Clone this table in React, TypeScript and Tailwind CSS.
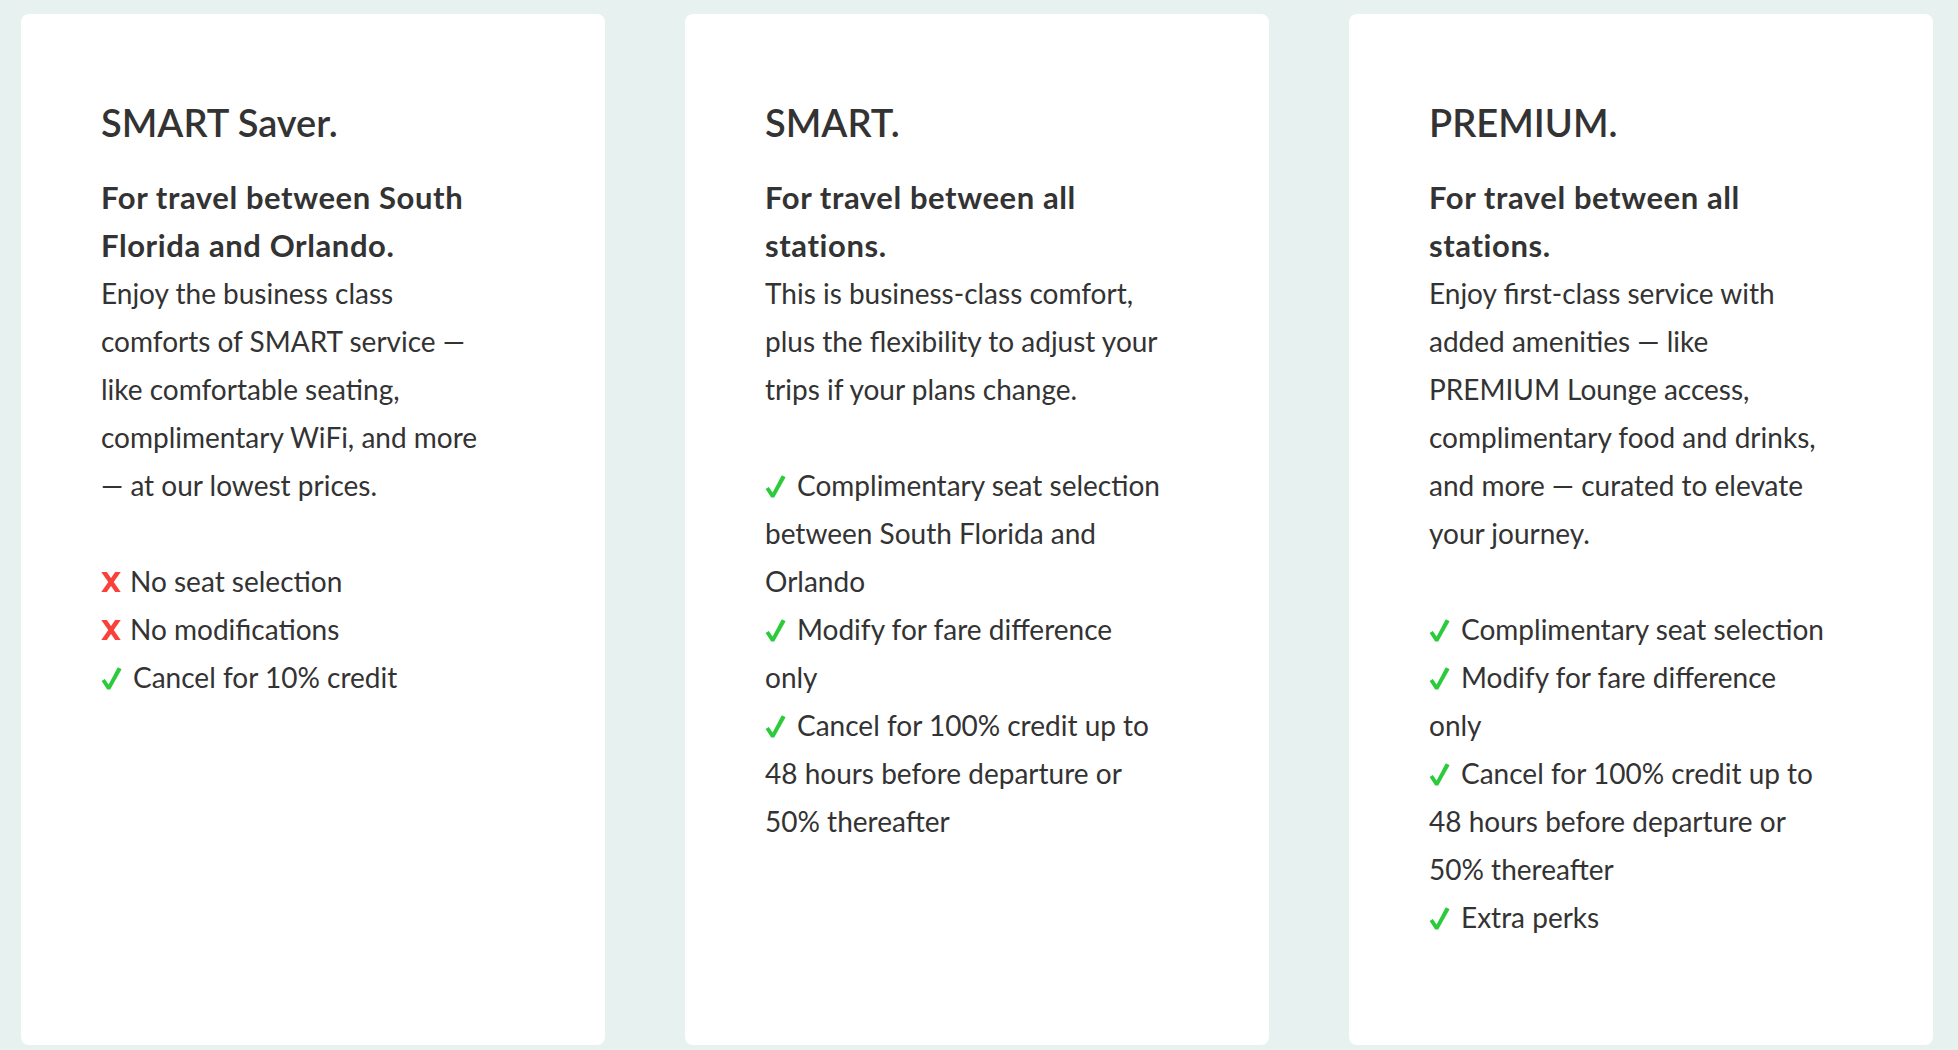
import React from "react";

type Item = { ok: boolean; lines: string[] };
type Card = { title: string; sub: string[]; body: string[]; items: Item[] };

const cards: Card[] = [
  {
    title: "SMART Saver.",
    sub: ["For travel between South", "Florida and Orlando."],
    body: [
      "Enjoy the business class",
      "comforts of SMART service —",
      "like comfortable seating,",
      "complimentary WiFi, and more",
      "— at our lowest prices.",
    ],
    items: [
      { ok: false, lines: ["No seat selection"] },
      { ok: false, lines: ["No modifications"] },
      { ok: true, lines: ["Cancel for 10% credit"] },
    ],
  },
  {
    title: "SMART.",
    sub: ["For travel between all", "stations."],
    body: [
      "This is business-class comfort,",
      "plus the flexibility to adjust your",
      "trips if your plans change.",
    ],
    items: [
      { ok: true, lines: ["Complimentary seat selection", "between South Florida and", "Orlando"] },
      { ok: true, lines: ["Modify for fare difference", "only"] },
      { ok: true, lines: ["Cancel for 100% credit up to", "48 hours before departure or", "50% thereafter"] },
    ],
  },
  {
    title: "PREMIUM.",
    sub: ["For travel between all", "stations."],
    body: [
      "Enjoy first-class service with",
      "added amenities — like",
      "PREMIUM Lounge access,",
      "complimentary food and drinks,",
      "and more — curated to elevate",
      "your journey.",
    ],
    items: [
      { ok: true, lines: ["Complimentary seat selection"] },
      { ok: true, lines: ["Modify for fare difference", "only"] },
      { ok: true, lines: ["Cancel for 100% credit up to", "48 hours before departure or", "50% thereafter"] },
      { ok: true, lines: ["Extra perks"] },
    ],
  },
];

function Check() {
  return (
    <svg
      width="21"
      height="23"
      viewBox="0 0 21 23"
      className="inline-block mr-[11px]"
      style={{ verticalAlign: "-2px" }}
    >
      <path d="M0.6 14 L3.8 12 L7.6 17.6 L16.8 0.3 L20.6 2.2 L9.2 22.6 L6.2 22.6 Z" fill="#2bcb3b" />
    </svg>
  );
}

function Cross() {
  return (
    <svg
      width="20"
      height="20"
      viewBox="0 0 20 20"
      className="inline-block mr-[9px]"
      style={{ verticalAlign: "0px" }}
    >
      <path d="M0.3 0 L5.8 0 L19.7 20 L14.2 20 Z" fill="#f9413a" />
      <path d="M14.2 0 L19.7 0 L5.8 20 L0.3 20 Z" fill="#f9413a" />
    </svg>
  );
}

function CardView({ c }: { c: Card }) {
  return (
    <div className="w-[584px] shrink-0 h-[1031px] bg-white rounded-[8px] pl-[80px] pr-[40px] pt-[84px]">
      <h2 className="text-[38px] leading-[48px] font-semibold text-[#333333] whitespace-nowrap">{c.title}</h2>
      <div className="mt-[27px] text-[31px] leading-[48px] font-bold tracking-[0.6px] text-[#333333] whitespace-nowrap">
        {c.sub.map((l, i) => (
          <div key={i}>{l}</div>
        ))}
      </div>
      <div className="text-[28px] leading-[48px] text-[#333333] whitespace-nowrap">
        {c.body.map((l, i) => (
          <div key={i}>{l}</div>
        ))}
      </div>
      <div className="mt-[48px] text-[28px] leading-[48px] text-[#333333] whitespace-nowrap">
        {c.items.map((it, i) => (
          <div key={i}>
            {it.lines.map((l, j) => (
              <div key={j}>
                {j === 0 && (it.ok ? <Check /> : <Cross />)}
                {l}
              </div>
            ))}
          </div>
        ))}
      </div>
    </div>
  );
}

export default function App() {
  return (
    <div
      className="w-[1958px] h-[1050px] bg-[#e7f1ef] flex gap-[80px] pl-[21px] pt-[14px] overflow-hidden"
      style={{ fontFamily: "Lato, 'Noto Sans', sans-serif" }}
    >
      {cards.map((c, i) => (
        <CardView key={i} c={c} />
      ))}
    </div>
  );
}
